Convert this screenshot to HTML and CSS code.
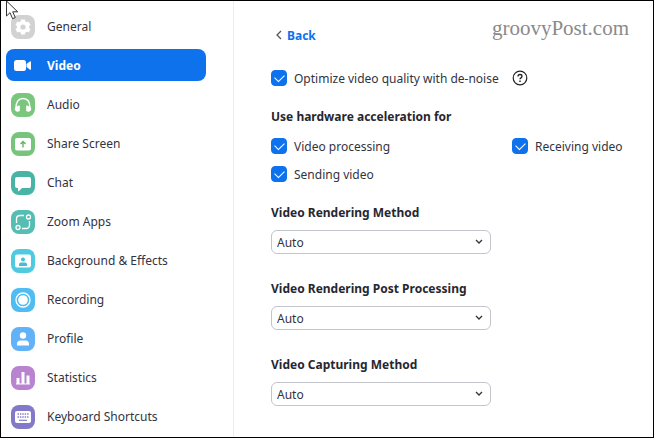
FILE: index.html
```html
<!DOCTYPE html>
<html lang="en">
<head>
    <meta charset="UTF-8">
    <meta name="viewport" content="width=device-width, initial-scale=1.0">
    <title>Video Settings</title>
    <link rel="stylesheet" href="styles.css">
</head>
<body>
    <div class="window">
        <nav class="sidebar">
            <a class="item" href="#general">
                <svg class="icon" viewBox="0 0 24 24">
                    <rect width="24" height="24" rx="8" fill="#d2d2d2"/>
                    <circle cx="12" cy="12" r="4.4" fill="none" stroke="#fff" stroke-width="3.6"/>
                    <path d="M12 4.4v3M12 16.600v3M5.400 8.200l2.600 1.500M16 14.300l2.600 1.500M5.400 15.800l2.600-1.500M16 9.700l2.600-1.500" stroke="#fff" stroke-width="4"/>
                </svg>
                General
            </a>
            <a class="item active" href="#video">
                <svg class="icon" viewBox="0 0 24 24">
                    <rect x="3" y="6" width="12" height="11" rx="2.500" fill="#fff"/>
                    <path d="M15.500 10l3.200-2.600q1.300-.7 1.300.6v7q0 1.300-1.300.6l-3.200-2.600z" fill="#fff"/>
                </svg>
                Video
            </a>
            <a class="item" href="#audio">
                <svg class="icon" viewBox="0 0 24 24">
                    <rect width="24" height="24" rx="8" fill="#7bc67e"/>
                    <path d="M5 15q0-9.500 7-9.500t7 9.500" fill="none" stroke="#fff" stroke-width="1.400"/>
                    <path d="M8.800 12.500v5.500q-1.500 1-3.300.6-2.300-1-1.700-3.300.6-1.800 2.200-1.800 1.500-1.500 2.800-1zM15.200 12.500v5.500q1.500 1 3.300.6 2.300-1 1.700-3.300-.6-1.800-2.200-1.800-1.500-1.500-2.800-1z" fill="#fff"/>
                </svg>
                Audio
            </a>
            <a class="item" href="#share">
                <svg class="icon" viewBox="0 0 24 24">
                    <rect width="24" height="24" rx="8" fill="#76c57b"/>
                    <rect x="4" y="6" width="16" height="12.500" rx="2" fill="#fff"/>
                    <path d="M12 15.500v-5.500M9.500 12l2.500-2.500 2.500 2.500" fill="none" stroke="#60b567" stroke-width="1.400"/>
                </svg>
                Share Screen
            </a>
            <a class="item" href="#chat">
                <svg class="icon" viewBox="0 0 24 24">
                    <rect width="24" height="24" rx="8" fill="#48b4a5"/>
                    <path d="M6 6h12q2 0 2 2v7q0 2-2 2h-7l-3 3q-1 .8-1-.5v-2.500h-1q-2 0-2-2v-7q0-2 2-2z" fill="#fff"/>
                </svg>
                Chat
            </a>
            <a class="item" href="#apps">
                <svg class="icon" viewBox="0 0 24 24">
                    <rect width="24" height="24" rx="8" fill="#55bdb2"/>
                    <g fill="none" stroke="#fff" stroke-width="1.300">
                        <path d="M5.500 13v-4q0-3.500 3.500-3.500h4M18.500 11v4q0 3.500-3.500 3.500h-4"/>
                        <circle cx="17.500" cy="7" r="2"/>
                        <circle cx="7" cy="17.500" r="2"/>
                    </g>
                </svg>
                Zoom Apps
            </a>
            <a class="item" href="#background">
                <svg class="icon" viewBox="0 0 24 24">
                    <rect width="24" height="24" rx="8" fill="#4ecbe0"/>
                    <rect x="4" y="5.500" width="16" height="13" rx="2" fill="#fff"/>
                    <circle cx="12" cy="10.500" r="2" fill="#45bdd6"/>
                    <path d="M8 17v-1.500q0-2 2-2h4q2 0 2 2v1.500z" fill="#45bdd6"/>
                </svg>
                Background &amp; Effects
            </a>
            <a class="item" href="#recording">
                <svg class="icon" viewBox="0 0 24 24">
                    <rect width="24" height="24" rx="8" fill="#4fbcf2"/>
                    <circle cx="12" cy="12" r="7" fill="none" stroke="#fff" stroke-width="1.300"/>
                    <circle cx="12" cy="12" r="4.800" fill="#fff"/>
                </svg>
                Recording
            </a>
            <a class="item" href="#profile">
                <svg class="icon" viewBox="0 0 24 24">
                    <rect width="24" height="24" rx="8" fill="#62b2f7"/>
                    <circle cx="12" cy="8.500" r="3.200" fill="#fff"/>
                    <path d="M6 18.500v-1.500q0-3.500 3.500-3.500h5q3.500 0 3.500 3.500v1.500z" fill="#fff"/>
                </svg>
                Profile
            </a>
            <a class="item" href="#statistics">
                <svg class="icon" viewBox="0 0 24 24">
                    <rect width="24" height="24" rx="8" fill="#b983cf"/>
                    <path d="M5.500 12h3v6h-3zM10.500 6h3v12h-3zM15.500 9.500h3v8.500h-3z" fill="#fff"/>
                    <path d="M5 18h14" stroke="#fff"/>
                </svg>
                Statistics
            </a>
            <a class="item" href="#keyboard">
                <svg class="icon" viewBox="0 0 24 24">
                    <rect width="24" height="24" rx="8" fill="#8279c9"/>
                    <rect x="4" y="6" width="16" height="12" rx="2" fill="#fff"/>
                    <path d="M6.500 9h11M6.500 12h11" stroke="#8279c9" stroke-width="1.400" stroke-dasharray="1.400 1"/>
                    <path d="M8 15.300h8" stroke="#8279c9" stroke-width="1.200"/>
                </svg>
                Keyboard Shortcuts
            </a>
        </nav>

        <main class="content">
            <a class="back" href="#video">
                <svg class="chevron" viewBox="0 0 8 10"><path d="M6 1L2 5l4 4" fill="none" stroke="#555" stroke-width="1.300"/></svg>
                Back
            </a>

            <div class="denoise">
                <label class="check"><input type="checkbox" checked> Optimize video quality with de-noise</label>
                <button class="help" type="button" aria-label="Help">
                    <svg viewBox="0 0 16 16" fill="none" stroke="#222">
                        <circle cx="8" cy="8" r="6.800" stroke-width="1.200"/>
                        <path d="M6 6.500q0-2 2-2t2 1.800q0 1-1 1.600t-1 1.300" stroke-width="1.300"/>
                        <path d="M8 10.500v1.400" stroke-width="1.400"/>
                    </svg>
                </button>
            </div>

            <h2>Use hardware acceleration for</h2>
            <div class="checks">
                <label class="check"><input type="checkbox" checked> Video processing</label>
                <label class="check"><input type="checkbox" checked> Receiving video</label>
                <label class="check"><input type="checkbox" checked> Sending video</label>
            </div>

            <div class="field">
                <label for="rendering">Video Rendering Method</label>
                <div class="select">
                    <select id="rendering"><option>Auto</option></select>
                    <svg class="arrow" viewBox="0 0 8 6"><path d="M1 1l3 3 3-3" fill="none" stroke="#333" stroke-width="1.300"/></svg>
                </div>
            </div>
            <div class="field">
                <label for="post">Video Rendering Post Processing</label>
                <div class="select">
                    <select id="post"><option>Auto</option></select>
                    <svg class="arrow" viewBox="0 0 8 6"><path d="M1 1l3 3 3-3" fill="none" stroke="#333" stroke-width="1.300"/></svg>
                </div>
            </div>
            <div class="field">
                <label for="capturing">Video Capturing Method</label>
                <div class="select">
                    <select id="capturing"><option>Auto</option></select>
                    <svg class="arrow" viewBox="0 0 8 6"><path d="M1 1l3 3 3-3" fill="none" stroke="#333" stroke-width="1.300"/></svg>
                </div>
            </div>
        </main>

        <div class="watermark">groovyPost.com</div>
        <svg class="cursor" viewBox="0 0 13 20"><path d="M.5 1v15l3.500-3.300 2.600 6 2.700-1.200-2.600-5.700h5z" fill="#fff" stroke="#333"/></svg>
    </div>
</body>
</html>
```
FILE: styles.css
```css
* {
    box-sizing: border-box;
}
body {
    margin: 0;
    font-family: "Noto Sans", "Open Sans", sans-serif;
    font-size: 12px;
    line-height: 20px;
    color: #33333f;
    background-color: #fff;
}
.window {
    position: relative;
    display: flex;
    min-height: 100vh;
    border: 1px solid #000;
}
.sidebar {
    display: flex;
    flex-direction: column;
    gap: 7px;
    width: 233px;
    padding: 9px 27px 4px 5px;
    border-right: 1px solid #ececf2;
}
.item {
    display: flex;
    align-items: center;
    gap: 12px;
    height: 32px;
    padding: 2px 0 0 5px;
    border-radius: 8px;
    color: inherit;
    text-decoration: none;
}
.item.active {
    background-color: #0e72ed;
    color: #fff;
    font-weight: bold;
}
.icon {
    width: 24px;
    height: 24px;
}
.content {
    flex: 1;
    padding: 25px 20px 19px 37px;
}
.back {
    display: flex;
    align-items: center;
    gap: 4px;
    width: max-content;
    padding-left: 4px;
    color: #0e72ed;
    font-weight: bold;
    text-decoration: none;
}
.chevron {
    width: 8px;
    height: 10px;
    margin-bottom: 2px;
}
.denoise {
    display: flex;
    align-items: center;
    gap: 13px;
    margin-top: 23px;
}
.check {
    display: flex;
    align-items: center;
    gap: 7px;
    white-space: nowrap;
}
.check input {
    appearance: none;
    width: 16px;
    height: 16px;
    margin: 0 0 2px;
    border-radius: 4px;
    background-color: #fff;
    border: 1px solid #c4c4cc;
}
.check input:checked {
    display: grid;
    place-content: start center;
    padding-top: 3px;
    background-color: #0e72ed;
    border-color: #0e72ed;
}
.check input:checked::before {
    content: "";
    width: 8px;
    height: 5px;
    border-left: 1px solid #fff;
    border-bottom: 1px solid #fff;
    transform: rotate(-45deg);
}
.help {
    width: 16px;
    height: 16px;
    margin-bottom: 2px;
    padding: 0;
    border: none;
    background: none;
}
.help svg {
    display: block;
}
h2 {
    margin: 18px 0 10px;
    font-size: 12px;
    line-height: 20px;
    color: #27272f;
}
.checks {
    display: grid;
    grid-template-columns: 241px 1fr;
    gap: 8px 0;
    margin-bottom: 18px;
}
.field {
    margin-bottom: 25px;
}
.field:last-child {
    margin-bottom: 0;
}
.field label {
    display: block;
    margin-bottom: 7px;
    font-weight: bold;
    color: #27272f;
}
.select {
    position: relative;
    width: 220px;
}
.select select {
    appearance: none;
    display: block;
    width: 100%;
    height: 24px;
    padding: 2px 5px 0;
    border: 1px solid #c4c4cc;
    border-radius: 6px;
    background-color: #fff;
    font: inherit;
    color: inherit;
}
.arrow {
    position: absolute;
    top: 9px;
    right: 8px;
    width: 8px;
    height: 6px;
    pointer-events: none;
}
.watermark {
    position: absolute;
    top: 15px;
    right: 24px;
    font-family: "Liberation Serif", serif;
    font-size: 21px;
    line-height: 24px;
    color: #8a8a8a;
}
.cursor {
    position: absolute;
    top: -1px;
    left: 5px;
    width: 13px;
    height: 20px;
}
```
